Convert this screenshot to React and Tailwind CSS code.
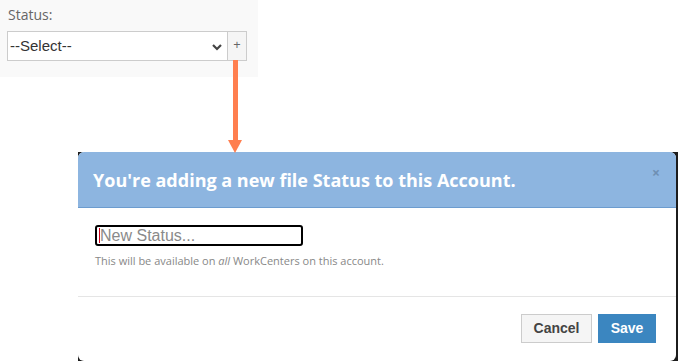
import React from "react";

export default function App() {
  return (
    <div className="relative w-[678px] h-[361px] bg-white overflow-hidden" style={{ fontFamily: '"Open Sans", sans-serif' }}>
      {/* top panel */}
      <div className="w-[258px] h-[77px] bg-[#f9f9f9] pt-[5px] pl-[7px]">
        <div className="text-[14px] leading-[20px] text-[#666] pl-[1px]">Status:</div>
        <div className="flex mt-[6px]">
          <div className="w-[221px] h-[30px] bg-white border border-[#ccc] flex items-center justify-between pl-[2px] pr-[4px]">
            <span className="text-[15px] text-[#333]" style={{ fontFamily: '"Liberation Sans", Arial, sans-serif' }}>--Select--</span>
            <svg width="12" height="10" viewBox="0 0 12 10" className="mt-[1px]">
              <path d="M2 3 L6 7 L10 3" stroke="#444" strokeWidth="2.2" fill="none" />
            </svg>
          </div>
          <div className="w-[19px] h-[30px] bg-[#f5f5f5] border border-l-0 border-[#ccc] flex items-center justify-center text-[13px] text-[#666] pb-[2px]">+</div>
        </div>
      </div>

      {/* arrow annotation */}
      <svg className="absolute left-[226px] top-[60px]" width="18" height="93" viewBox="0 0 18 93">
        <rect x="7" y="0" width="5" height="82" fill="#ff7f4f" />
        <path d="M2 80 L16 80 L9 93 Z" fill="#ff7f4f" />
      </svg>

      {/* modal */}
      <div className="mt-[75px] ml-[78px] w-[600px] h-[209px] bg-[#1c1c1c] flex">
        <div className="w-[598px] h-[209px] bg-white rounded-[6px] overflow-hidden flex flex-col">
          <div className="h-[56px] bg-[#8db5e0] border-b border-[#6c9ccf] flex items-center justify-between pl-[15px] pr-[16px]">
            <div className="text-[18px] font-bold text-white mt-[1px]">You're adding a new file Status to this Account.</div>
            <div className="text-[14px] text-[#6f8fb3] font-bold -mt-[15px]">×</div>
          </div>
          <div className="pl-[17px] pt-[17px] h-[89px] border-b border-[#e5e5e5]">
            <div className="relative w-[208px] h-[21px] border-2 border-black rounded-[3px] flex items-center pl-[2px]">
              <div className="w-[1px] h-[15px] bg-[#d0021b]"></div>
              <span className="text-[16px] text-[#8a8a8a] leading-none" style={{ fontFamily: '"Liberation Sans", Arial, sans-serif' }}>New Status...</span>
            </div>
            <div className="text-[11px] text-[#888] mt-[7px]">
              This will be available on <i>all</i> WorkCenters on this account.
            </div>
          </div>
          <div className="flex justify-end gap-[6px] pr-[20px] pt-[17px]" style={{ fontFamily: '"Liberation Sans", Arial, sans-serif' }}>
            <div className="w-[71px] h-[29px] bg-[#f5f5f5] border border-[#ccc] flex items-center justify-center text-[14px] font-bold text-[#444]">Cancel</div>
            <div className="w-[58px] h-[29px] bg-[#3b86c0] flex items-center justify-center text-[14px] font-bold text-white">Save</div>
          </div>
        </div>
      </div>
    </div>
  );
}
